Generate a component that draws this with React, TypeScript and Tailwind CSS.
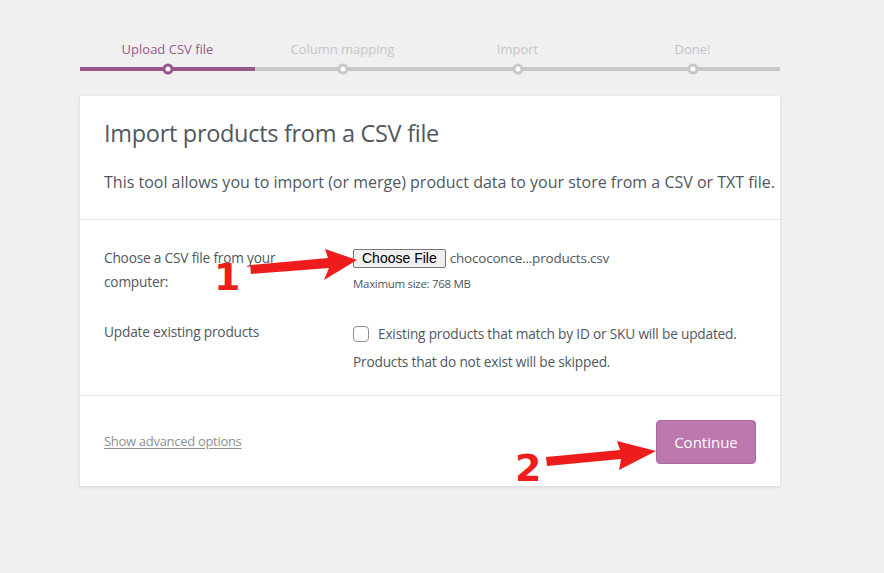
import React from 'react';

const STEPS = [
  { id: 'upload', label: 'Upload CSV file', done: true },
  { id: 'mapping', label: 'Column mapping', done: false },
  { id: 'import', label: 'Import', done: false },
  { id: 'done', label: 'Done!', done: false },
];

function Arrow({ d }: { d: string }) {
  return <path d={d} fill="#ee1c1c" />;
}

export default function App() {
  return (
    <div className="relative min-h-[573px] w-[884px] bg-[#f0f0f1] font-['Open_Sans',sans-serif] text-[#50575e]">
      {/* ── Stepper ── */}
      <ol className="mx-[80px] flex w-[700px] pt-[38px]">
        {STEPS.map((s) => (
          <li key={s.id} className="flex flex-1 flex-col items-center">
            <span className={`text-[13px] leading-[22px] ${s.done ? 'text-[#96588a]' : 'text-[#c3c4c7]'}`}>
              {s.label}
            </span>
            <div className={`relative mt-[7px] h-[4px] w-full ${s.done ? 'bg-[#96588a]' : 'bg-[#c8c8c8]'}`}>
              <span
                className={`absolute left-1/2 top-1/2 h-[11px] w-[11px] -translate-x-1/2 -translate-y-1/2 rounded-full border-[3px] bg-white ${
                  s.done ? 'border-[#96588a]' : 'border-[#c8c8c8]'
                }`}
              />
            </div>
          </li>
        ))}
      </ol>

      {/* ── Card ── */}
      <div className="mx-[80px] mt-[25px] w-[700px] bg-white shadow-[0_1px_3px_rgba(0,0,0,0.13)]">
        <header className="border-b border-[#e5e5e5] px-[24px] pb-[26px] pt-[20px]">
          <h1 className="text-[23.5px] leading-[34px] tracking-[-0.3px] text-[#50575e]">Import products from a CSV file</h1>
          <p className="mt-[21px] whitespace-nowrap text-[16px] leading-[22px]">
            This tool allows you to import (or merge) product data to your store from a CSV or TXT file.
          </p>
        </header>

        <section className="border-b border-[#e5e5e5] px-[24px] pb-[19px] pt-[26px] text-[13.7px]">
          <div className="flex">
            <div className="w-[249px]">
              <label className="block w-[190px] leading-[24px] tracking-[-0.2px]">
                Choose a CSV file from your computer:
              </label>
            </div>
            <div className="pt-[2px]">
              <div className="flex items-center">
                <span className="rounded-[2px] border border-[#767676] bg-[#efefef] px-[8px] font-['Liberation_Sans',Arial,sans-serif] text-[14px] leading-[17px] text-black">
                  Choose File
                </span>
                <span className="ml-[4px] text-[13.5px] tracking-[-0.2px]">chococonce...products.csv</span>
              </div>
              <p className="mt-[7px] text-[11.5px] tracking-[-0.3px]">Maximum size: 768 MB</p>
            </div>
          </div>

          <div className="mt-[26px] flex">
            <label className="w-[249px] leading-[24px] tracking-[-0.2px]">Update existing products</label>
            <div className="leading-[28px] tracking-[-0.2px]">
              <div className="flex items-center">
                <span className="mr-[9px] h-[16px] w-[16px] rounded-[4px] border border-[#8c8f94] bg-white" />
                Existing products that match by ID or SKU will be updated.
              </div>
              <div>Products that do not exist will be skipped.</div>
            </div>
          </div>
        </section>

        <footer className="flex items-center justify-between px-[24px] pb-[22px] pt-[24px]">
          <a className="text-[13px] tracking-[-0.3px] text-[#8c8f94] underline underline-offset-2">Show advanced options</a>
          <button className="h-[44px] w-[100px] rounded-[4px] border border-[#a86a9c] bg-[#bb77ae] text-[15px] text-white">
            Continue
          </button>
        </footer>
      </div>

      {/* ── Annotations ── */}
      <svg className="pointer-events-none absolute left-0 top-0" width="884" height="573">
        <Arrow d="M250 265 L328 258 L325 249 L357 260 L324 280 L329 268 L251 274 Z" />
        <Arrow d="M546 457 L620 450 L617 441 L656 451 L619 470 L621 459 L547 466 Z" />
      </svg>
      <span className="absolute left-[214px] top-[255px] font-['DejaVu_Sans',sans-serif] text-[38px] font-bold leading-[44px] text-[#ee1c1c]">
        1
      </span>
      <span className="absolute left-[515px] top-[446px] font-['DejaVu_Sans',sans-serif] text-[38px] font-bold leading-[44px] text-[#ee1c1c]">
        2
      </span>
    </div>
  );
}
